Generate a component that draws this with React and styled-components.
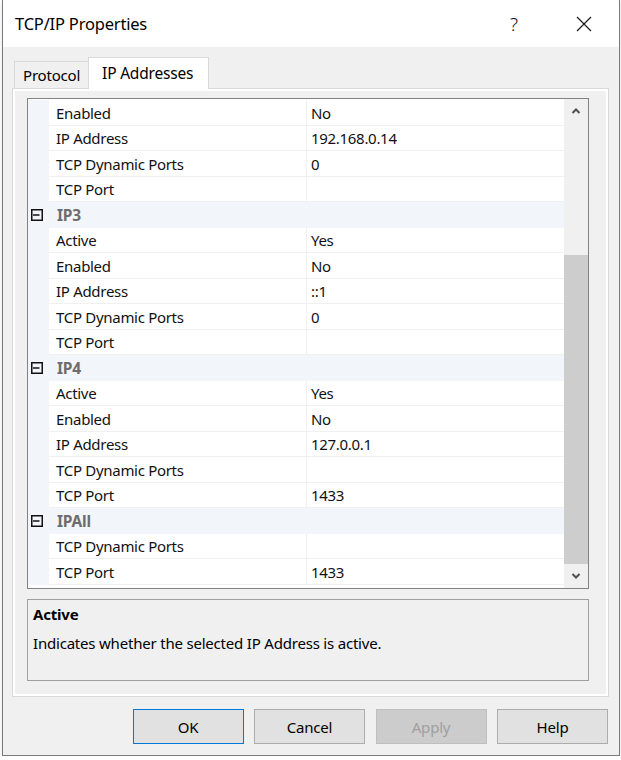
import React from 'react';
import styled, { createGlobalStyle } from 'styled-components';

const Global = createGlobalStyle`
  html, body { margin: 0; padding: 0; background: #ffffff; }
  body { font-family: "Noto Sans", "Open Sans", sans-serif; color: #000; letter-spacing: -0.2px; }
  * { box-sizing: border-box; }
`;

const Window = styled.div`
  margin-left: 2px;
  width: 618px;
  height: 756px;
  border: 1px solid #7a7a7a;
  border-top: none;
  background: #f0f0f0;
  display: flex;
  flex-direction: column;
  box-shadow: 0 2px 4px rgba(0, 0, 0, 0.12);
`;

const TitleBar = styled.div`
  height: 47px;
  background: #ffffff;
  display: flex;
  align-items: center;
  padding-left: 12px;
  flex-shrink: 0;
`;

const Title = styled.div`
  font-size: 16.5px;
  color: #000;
  flex: 1;
`;

const CaptionButton = styled.div`
  width: 70px;
  height: 47px;
  display: flex;
  align-items: center;
  justify-content: center;
  font-size: 19px;
  font-weight: 300;
  color: #111;
`;

const Body = styled.div`
  flex: 1;
  display: flex;
  flex-direction: column;
  padding: 10px 9px 11px 9px;
`;

const TabStrip = styled.div`
  display: flex;
  align-items: flex-end;
  height: 32px;
  padding-left: 2px;
  margin-bottom: -1px;
  position: relative;
  z-index: 1;
`;

const Tab = styled.div`
  height: ${(p) => (p.$active ? '32px' : '28px')};
  padding: 0 ${(p) => (p.$active ? '15px 0 13px' : '8px')};
  margin-left: ${(p) => (p.$active ? '-1px' : '0')};
  display: flex;
  align-items: center;
  font-size: ${(p) => (p.$active ? '15.5px' : '15px')};
  color: #000;
  background: ${(p) => (p.$active ? '#ffffff' : '#f0f0f0')};
  border: 1px solid #d9d9d9;
  border-bottom: ${(p) => (p.$active ? 'none' : '1px solid #d9d9d9')};
  padding-bottom: ${(p) => (p.$active ? '1px' : '0')};
`;

const Panel = styled.div`
  width: 597px;
  height: 609px;
  border: 1px solid #d9d9d9;
  background: #ffffff;
  padding: 2px;
`;

const Page = styled.div`
  height: 100%;
  background: #f0f0f0;
  padding: 7px 0 0 12px;
  display: flex;
  flex-direction: column;
  gap: 10px;
`;

const Grid = styled.div`
  width: 562px;
  height: 491px;
  border: 1px solid #828282;
  background: #ffffff;
  display: flex;
  overflow: hidden;
`;

const GridContent = styled.div`
  flex: 1;
  padding-top: 1.25px;
  overflow: hidden;
`;

const Row = styled.div`
  display: grid;
  grid-template-columns: 21px 258px 1fr;
  height: 25.5px;
  background: ${(p) => (p.$category ? '#f2f5fa' : '#ffffff')};
`;

const Gutter = styled.div`
  background: #f2f5fa;
  display: flex;
  align-items: center;
  padding-left: 3px;
`;

const NameCell = styled.div`
  display: flex;
  align-items: center;
  padding-left: 7px;
  font-size: 15px;
  letter-spacing: -0.3px;
  color: #111;
  border-bottom: 1px solid #f0f0f0;
  border-right: 1px solid #f0f0f0;
  white-space: nowrap;
`;

const ValueCell = styled.div`
  display: flex;
  align-items: center;
  padding-left: 4px;
  font-size: 15px;
  letter-spacing: -0.3px;
  color: #111;
  border-bottom: 1px solid #f0f0f0;
  white-space: nowrap;
`;

const CategoryName = styled.div`
  grid-column: 2 / 4;
  display: flex;
  align-items: center;
  padding-left: 8px;
  font-size: 15.5px;
  font-weight: 700;
  color: #6d6d6d;
`;

const ScrollBar = styled.div`
  width: 24px;
  background: #f0f0f0;
  display: flex;
  flex-direction: column;
`;

const ScrollArrow = styled.div`
  height: 24px;
  display: flex;
  align-items: center;
  justify-content: center;
  flex-shrink: 0;
`;

const Track = styled.div`
  flex: 1;
  display: flex;
  flex-direction: column;
  padding-top: 132px;
`;

const Thumb = styled.div`
  flex: 1;
  background: #cdcdcd;
`;

const Description = styled.div`
  width: 562px;
  height: 82px;
  border: 1px solid #a0a0a0;
  padding: 4px 5px;
`;

const DescTitle = styled.div`
  font-size: 15px;
  font-weight: 700;
  line-height: 20px;
  color: #000;
`;

const DescText = styled.div`
  font-size: 15px;
  line-height: 20px;
  margin-top: 9px;
  color: #000;
`;

const ButtonRow = styled.div`
  display: flex;
  justify-content: flex-end;
  gap: 10.5px;
  margin-top: 12px;
  padding-right: 2px;
`;

const Button = styled.button`
  width: 111px;
  height: 35px;
  font-family: inherit;
  letter-spacing: -0.2px;
  font-size: 15px;
  color: ${(p) => (p.disabled ? '#a0a0a0' : '#000')};
  background: ${(p) => (p.disabled ? '#cccccc' : '#e1e1e1')};
  border: 1px solid ${(p) => (p.$primary ? '#0078d7' : p.disabled ? '#bfbfbf' : '#adadad')};
  padding: 0;
  margin: 0;
`;

const CollapseIcon = () => (
  <svg width="12" height="12" viewBox="0 0 12 12">
    <rect x="0.75" y="0.75" width="10.5" height="10.5" fill="none" stroke="#111" strokeWidth="1.5" />
    <line x1="2" y1="6" x2="8.5" y2="6" stroke="#111" strokeWidth="1.5" />
  </svg>
);

const Chevron = ({ up }) => (
  <svg width="10" height="6" viewBox="0 0 10 6">
    <polyline
      points={up ? '1.5,5 5,1.5 8.5,5' : '1.5,1 5,4.5 8.5,1'}
      fill="none"
      stroke="#505050"
      strokeWidth="2"
    />
  </svg>
);

const rows = [
  { name: 'Enabled', value: 'No' },
  { name: 'IP Address', value: '192.168.0.14' },
  { name: 'TCP Dynamic Ports', value: '0' },
  { name: 'TCP Port', value: '' },
  { category: 'IP3' },
  { name: 'Active', value: 'Yes' },
  { name: 'Enabled', value: 'No' },
  { name: 'IP Address', value: '::1' },
  { name: 'TCP Dynamic Ports', value: '0' },
  { name: 'TCP Port', value: '' },
  { category: 'IP4' },
  { name: 'Active', value: 'Yes' },
  { name: 'Enabled', value: 'No' },
  { name: 'IP Address', value: '127.0.0.1' },
  { name: 'TCP Dynamic Ports', value: '' },
  { name: 'TCP Port', value: '1433' },
  { category: 'IPAll' },
  { name: 'TCP Dynamic Ports', value: '' },
  { name: 'TCP Port', value: '1433' },
];

export default function App() {
  return (
    <>
      <Global />
      <Window>
        <TitleBar>
          <Title>TCP/IP Properties</Title>
          <CaptionButton>?</CaptionButton>
          <CaptionButton>
            <svg width="16" height="16" viewBox="0 0 16 16">
              <path d="M1 1 L15 15 M15 1 L1 15" stroke="#111" strokeWidth="1.1" fill="none" />
            </svg>
          </CaptionButton>
        </TitleBar>
        <Body>
          <TabStrip>
            <Tab>Protocol</Tab>
            <Tab $active>IP Addresses</Tab>
          </TabStrip>
          <Panel>
            <Page>
              <Grid>
                <GridContent>
                  {rows.map((r, i) =>
                    r.category ? (
                      <Row key={i} $category>
                        <Gutter>
                          <CollapseIcon />
                        </Gutter>
                        <CategoryName>{r.category}</CategoryName>
                      </Row>
                    ) : (
                      <Row key={i}>
                        <Gutter />
                        <NameCell>{r.name}</NameCell>
                        <ValueCell>{r.value}</ValueCell>
                      </Row>
                    )
                  )}
                </GridContent>
                <ScrollBar>
                  <ScrollArrow>
                    <Chevron up />
                  </ScrollArrow>
                  <Track>
                    <Thumb />
                  </Track>
                  <ScrollArrow>
                    <Chevron />
                  </ScrollArrow>
                </ScrollBar>
              </Grid>
              <Description>
                <DescTitle>Active</DescTitle>
                <DescText>Indicates whether the selected IP Address is active.</DescText>
              </Description>
            </Page>
          </Panel>
          <ButtonRow>
            <Button $primary>OK</Button>
            <Button>Cancel</Button>
            <Button disabled>Apply</Button>
            <Button>Help</Button>
          </ButtonRow>
        </Body>
      </Window>
    </>
  );
}
